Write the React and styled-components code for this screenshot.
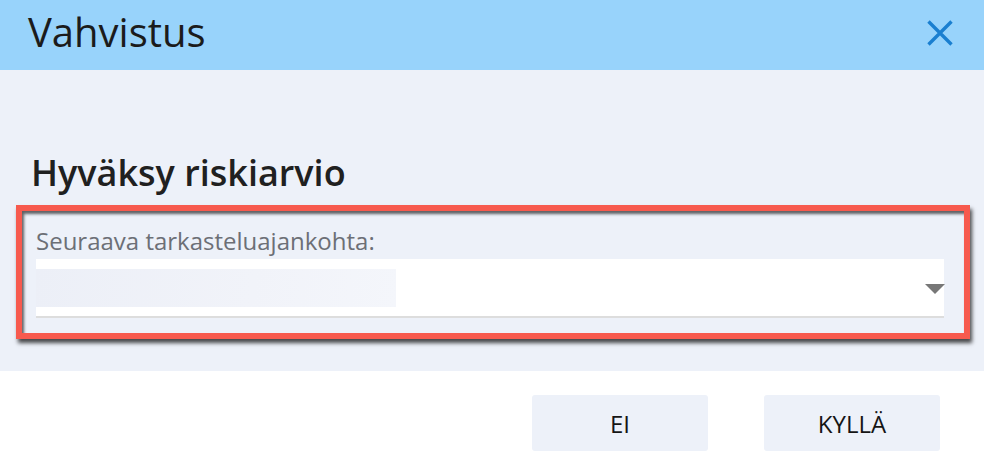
import React from "react";
import styled, { createGlobalStyle } from "styled-components";

const GlobalStyle = createGlobalStyle`
  html, body {
    margin: 0;
    padding: 0;
    background: #ffffff;
    font-family: "Open Sans", "Noto Sans", sans-serif;
  }
`;

const Dialog = styled.div`
  width: 984px;
  height: 468px;
  display: flex;
  flex-direction: column;
  background: #ffffff;
`;

const Header = styled.div`
  height: 70px;
  box-sizing: border-box;
  padding: 5px 28px 0 28px;
  display: flex;
  justify-content: space-between;
  align-items: flex-start;
  background: #98d3fb;
`;

const Title = styled.div`
  font-size: 40px;
  line-height: 54px;
  color: #1b1b1b;
`;

const CloseButton = styled.button`
  margin-top: 15px;
  margin-right: 3px;
  width: 26px;
  height: 26px;
  padding: 0;
  border: none;
  background: transparent;
  display: flex;
  align-items: center;
  justify-content: center;
  cursor: pointer;
`;

const Body = styled.div`
  height: 301px;
  box-sizing: border-box;
  padding: 78px 14px 0 16px;
  background: #edf1f9;
`;

const Heading = styled.h2`
  margin: 0 0 8px 15px;
  font-size: 36px;
  font-weight: 600;
  line-height: 49px;
  color: #202020;
`;

const FieldHighlight = styled.div`
  border: 6px solid #f75a4e;
  padding: 13px 20px 15px 14px;
  box-shadow: 2px 4px 4px rgba(0, 0, 0, 0.7),
    inset 2px 3px 3px rgba(0, 0, 0, 0.6);
`;

const Label = styled.div`
  font-size: 24px;
  line-height: 33px;
  color: #6c6f76;
  margin-bottom: 2px;
`;

const SelectBox = styled.div`
  height: 57px;
  background: #ffffff;
  border-bottom: 2px solid #dddddd;
  display: flex;
  align-items: center;
  justify-content: space-between;
`;

const ValuePlaceholder = styled.div`
  width: 360px;
  height: 38px;
  margin-top: 1px;
  background: linear-gradient(100deg, #eceff7 0%, #f1f3f9 60%, #f4f6fb 100%);
`;

const Caret = styled.div`
  width: 0;
  height: 0;
  margin-right: -1px;
  margin-top: 2px;
  border-left: 10px solid transparent;
  border-right: 10px solid transparent;
  border-top: 10px solid #777777;
`;

const Footer = styled.div`
  flex: 1;
  display: flex;
  justify-content: flex-end;
  align-items: flex-start;
  gap: 56px;
  padding: 24px 44px 0 0;
  background: #ffffff;
`;

const ActionButton = styled.button`
  width: 176px;
  height: 56px;
  border: none;
  border-radius: 3px;
  background: #edf1f9;
  font-family: "Open Sans", "Noto Sans", sans-serif;
  font-size: 24px;
  color: #151515;
  cursor: pointer;
`;

const CloseIcon = () => (
  <svg width="26" height="26" viewBox="0 0 26 26">
    <path
      d="M1.5 1.5 L24.5 24.5 M24.5 1.5 L1.5 24.5"
      stroke="#1a7fd0"
      strokeWidth="3.4"
      fill="none"
    />
  </svg>
);

export default function App() {
  return (
    <>
      <GlobalStyle />
      <Dialog>
        <Header>
          <Title>Vahvistus</Title>
          <CloseButton aria-label="Sulje">
            <CloseIcon />
          </CloseButton>
        </Header>
        <Body>
          <Heading>Hyväksy riskiarvio</Heading>
          <FieldHighlight>
            <Label>Seuraava tarkasteluajankohta:</Label>
            <SelectBox>
              <ValuePlaceholder />
              <Caret />
            </SelectBox>
          </FieldHighlight>
        </Body>
        <Footer>
          <ActionButton>EI</ActionButton>
          <ActionButton>KYLLÄ</ActionButton>
        </Footer>
      </Dialog>
    </>
  );
}
